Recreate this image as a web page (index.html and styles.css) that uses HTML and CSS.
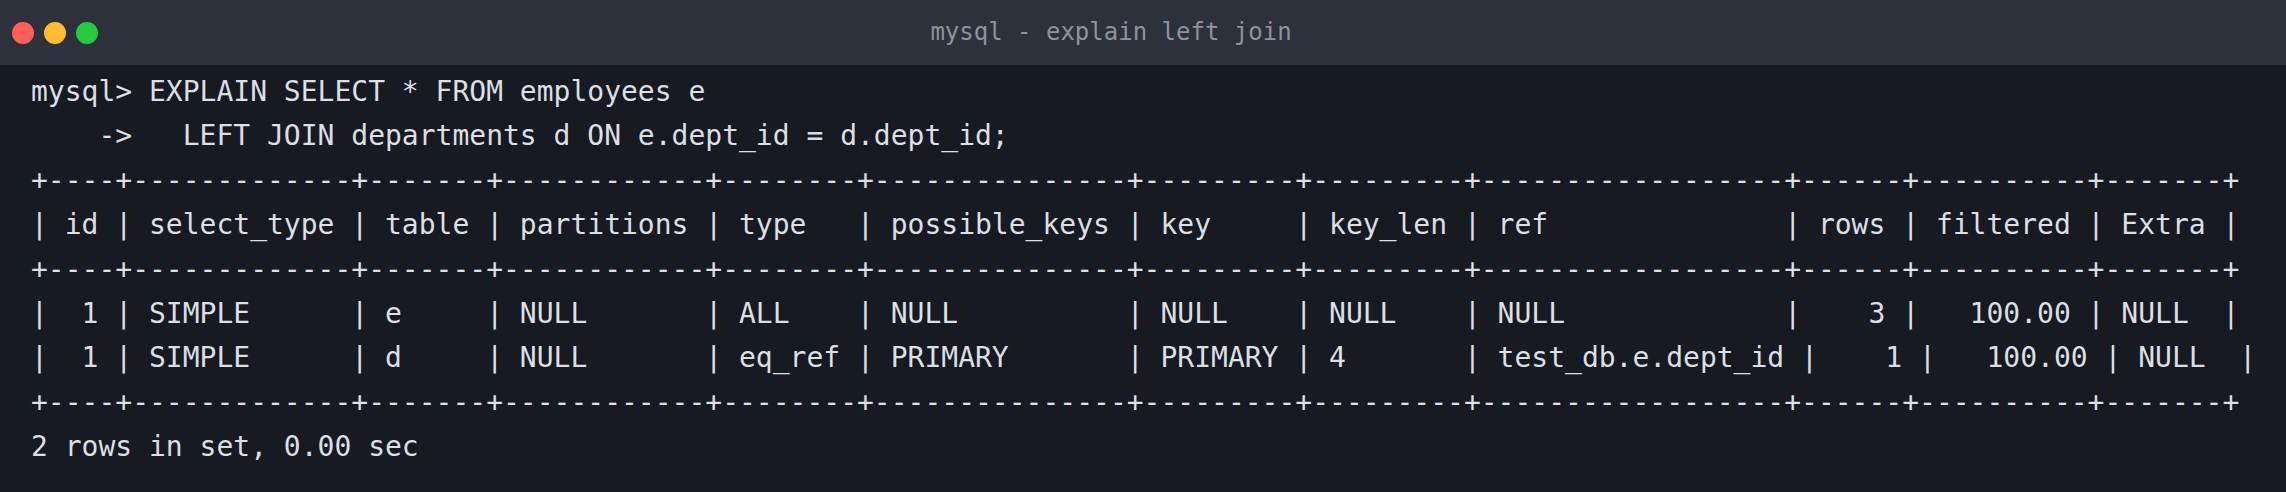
FILE: index.html
```html
<!DOCTYPE html>
<html lang="en">
<head>
<meta charset="utf-8">
<title>mysql - explain left join</title>
<link rel="stylesheet" href="styles.css">
</head>
<body>
<div class="window">
  <div class="titlebar">
    <div class="lights">
      <span class="light red"></span>
      <span class="light yellow"></span>
      <span class="light green"></span>
    </div>
    <div class="title">mysql - explain left join</div>
    <div class="spacer"></div>
  </div>
  <div class="terminal">
    <div class="line">mysql&gt; EXPLAIN SELECT * FROM employees e</div>
    <div class="line">    -&gt;   LEFT JOIN departments d ON e.dept_id = d.dept_id;</div>
    <div class="line">+----+-------------+-------+------------+--------+---------------+---------+---------+------------------+------+----------+-------+</div>
    <div class="line">| id | select_type | table | partitions | type   | possible_keys | key     | key_len | ref              | rows | filtered | Extra |</div>
    <div class="line">+----+-------------+-------+------------+--------+---------------+---------+---------+------------------+------+----------+-------+</div>
    <div class="line">|  1 | SIMPLE      | e     | NULL       | ALL    | NULL          | NULL    | NULL    | NULL             |    3 |   100.00 | NULL  |</div>
    <div class="line">|  1 | SIMPLE      | d     | NULL       | eq_ref | PRIMARY       | PRIMARY | 4       | test_db.e.dept_id |    1 |   100.00 | NULL  |</div>
    <div class="line">+----+-------------+-------+------------+--------+---------------+---------+---------+------------------+------+----------+-------+</div>
    <div class="line">2 rows in set, 0.00 sec</div>
  </div>
</div>
</body>
</html>
```

FILE: styles.css
```css
html, body {
  margin: 0;
  padding: 0;
  background: #171a21;
}

.window {
  width: 100%;
  min-height: 492px;
  background: #171a21;
  display: flex;
  flex-direction: column;
}

.titlebar {
  height: 65px;
  background: #2d313b;
  display: grid;
  grid-template-columns: 1fr auto 1fr;
  align-items: center;
}

.lights {
  display: flex;
  gap: 10px;
  padding-left: 12px;
  align-items: center;
}

.light {
  width: 22px;
  height: 22px;
  border-radius: 50%;
  display: block;
}

.red { background: #ff5f57; }
.yellow { background: #febc2e; }
.green { background: #28c840; }

.title {
  font-family: "DejaVu Sans Mono", monospace;
  font-size: 24px;
  color: #8e939c;
  padding-right: 64px;
  padding-bottom: 2px;
  white-space: pre;
}

.terminal {
  padding: 5px 0 20px 31px;
  font-family: "DejaVu Sans Mono", monospace;
  font-size: 28px;
  line-height: 44.4px;
  color: #dcdfe4;
}

.line {
  white-space: pre;
}
```
